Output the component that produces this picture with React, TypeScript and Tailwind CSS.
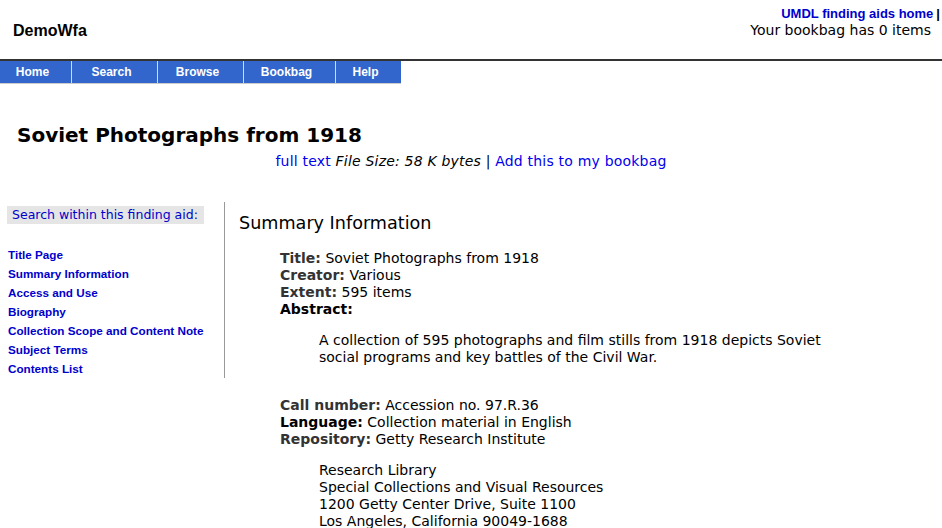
import React from "react";

const dv = { fontFamily: '"DejaVu Sans", Verdana, sans-serif' };
const ar = { fontFamily: '"Liberation Sans", Arial, sans-serif' };

function Nav() {
  const items: [string, string][] = [
    ["Home", "w-[71px]"],
    ["Search", "w-[85px]"],
    ["Browse", "w-[85px]"],
    ["Bookbag", "w-[91px]"],
    ["Help", "w-[65px]"],
  ];
  return (
    <div className="flex w-[401px] border-b border-[#cccccc]">
      {items.map(([label, w], i) => (
        <div key={label} className="flex">
          {i > 0 && <div className="w-px bg-[#e6dcb4]" />}
          <div
            className={`${w} h-[22px] bg-[#3366cc] text-white font-bold text-[12px] flex items-center justify-center pr-[6px]`}
            style={ar}
          >
            {label}
          </div>
        </div>
      ))}
    </div>
  );
}

export default function App() {
  const sideLinks = [
    "Title Page",
    "Summary Information",
    "Access and Use",
    "Biography",
    "Collection Scope and Content Note",
    "Subject Terms",
    "Contents List",
  ];
  return (
    <div className="w-[942px] h-[528px] overflow-hidden bg-white text-black">
      {/* header */}
      <div className="flex justify-between h-[59px]">
        <div className="pl-[13px] pt-[21px] text-[16px] font-bold leading-[20px]" style={ar}>
          DemoWfa
        </div>
        <div className="flex flex-col items-end pt-[5px] pr-[2px]">
          <div className="text-[13px] leading-[17px] font-bold" style={ar}>
            <span className="text-[#0000cc]">UMDL finding aids home</span>
            <span className="ml-[3px]">|</span>
          </div>
          <div className="text-[14px] leading-[17px] pr-[9px]" style={dv}>Your bookbag has 0 items</div>
        </div>
      </div>
      <div className="h-[2px] bg-[#333333]" />
      <Nav />

      {/* title */}
      <div className="pt-[39px] pl-[17px] text-[20px] font-bold leading-[24px]" style={dv}>
        Soviet Photographs from 1918
      </div>
      <div className="pt-[6px] text-center text-[14px] leading-[17px] tracking-[0.2px]" style={dv}>
        <span className="text-[#0000ee]">full text</span>{" "}
        <i>File Size: 58 K bytes</i> | <span className="text-[#0000ee]">Add this to my bookbag</span>
      </div>

      {/* body */}
      <div className="flex mt-[32px]">
        <div className="w-[225px] shrink-0 border-r border-[#999999] h-[176px]">
          <div className="ml-[7px] mt-[4px] w-[197px] h-[18px] bg-[#e5e5e5] flex items-center pl-[5px] text-[12.5px] whitespace-nowrap text-[#0000cc]" style={dv}>
            Search within this finding aid:
          </div>
          <div className="mt-[21px] pl-[8px] flex flex-col">
            {sideLinks.map((l) => (
              <div key={l} className="h-[19px] leading-[19px] text-[11.7px] font-bold text-[#0000cc]" style={ar}>
                {l}
              </div>
            ))}
          </div>
        </div>
        <div className="pl-[14px] pt-[10px]" style={dv}>
          <div className="text-[17.6px] leading-[22px]">Summary Information</div>
          <div className="pl-[41px] pt-[16px] text-[14px] leading-[17px]">
            <div><b className="text-[#333333]">Title:</b> Soviet Photographs from 1918</div>
            <div><b className="text-[#333333]">Creator:</b> Various</div>
            <div><b className="text-[#333333]">Extent:</b> 595 items</div>
            <div><b>Abstract:</b></div>
            <div className="pl-[39px] pt-[14px] w-[560px]">
              A collection of 595 photographs and film stills from 1918 depicts Soviet social programs and key battles of the Civil War.
            </div>
            <div className="pt-[31px]">
              <div><b className="text-[#333333]">Call number:</b> Accession no. 97.R.36</div>
              <div><b>Language:</b> Collection material in English</div>
              <div><b className="text-[#333333]">Repository:</b> Getty Research Institute</div>
            </div>
            <div className="pl-[39px] pt-[14px]">
              <div>Research Library</div>
              <div>Special Collections and Visual Resources</div>
              <div>1200 Getty Center Drive, Suite 1100</div>
              <div>Los Angeles, California 90049-1688</div>
            </div>
          </div>
        </div>
      </div>
    </div>
  );
}
